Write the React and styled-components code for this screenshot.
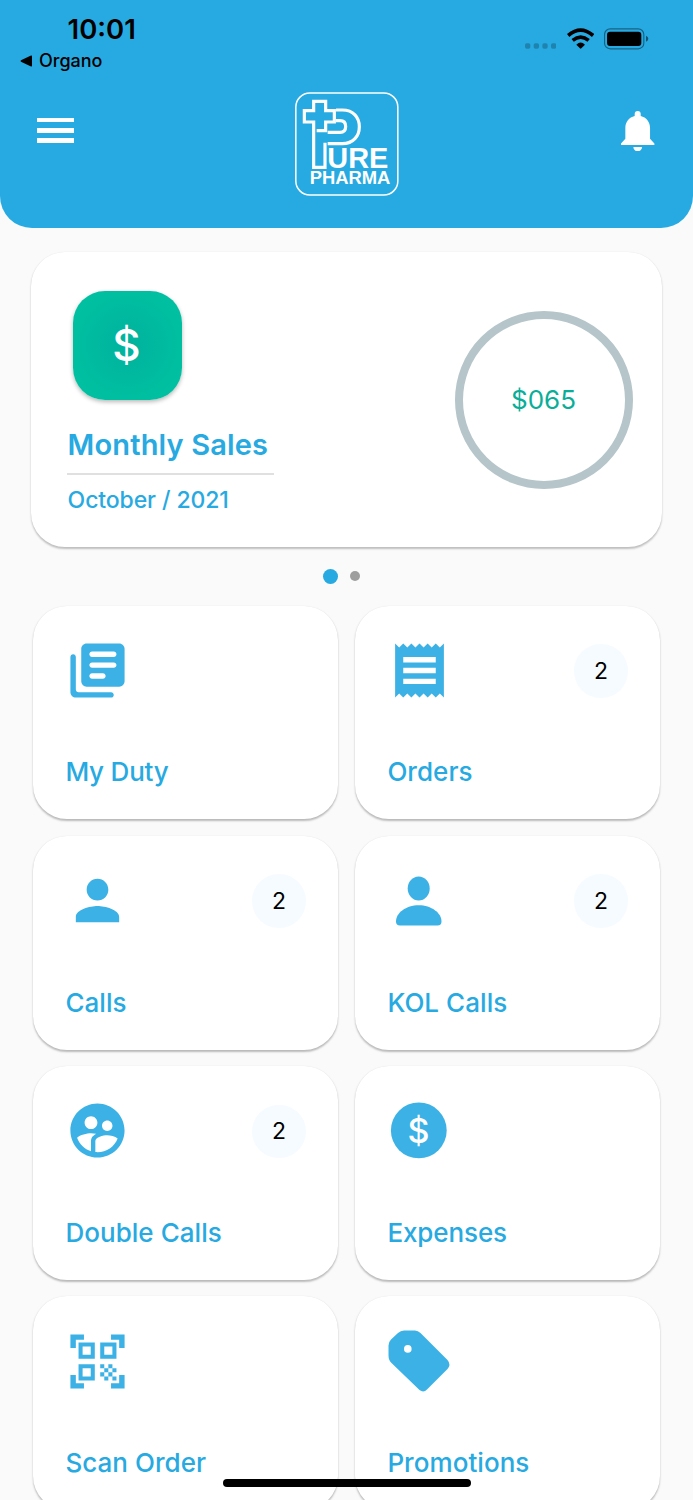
import styled, { createGlobalStyle } from "styled-components"
import { MdPerson, MdQrCodeScanner, MdReceipt, MdSupervisedUserCircle } from "react-icons/md"

const GlobalStyle = createGlobalStyle`
  * {
    box-sizing: border-box;
  }
  body {
    margin: 0;
    background-color: #fafafa;
    font-family: Inter, "Liberation Sans", sans-serif;
    overflow: hidden;
  }
  svg {
    display: block;
    flex-shrink: 0;
  }
`

const Screen = styled.div`
  width: 693px;
  height: 1500px;
  overflow: hidden;
  background-color: #fafafa;
`

const Header = styled.header`
  height: 227.5px;
  background-color: #27aae2;
  border-radius: 0 0 32px 32px;
`

const StatusBar = styled.div`
  height: 92px;
  display: flex;
  justify-content: space-between;
  padding: 13px 44px 0 20px;
`

const Time = styled.div`
  padding-left: 47.5px;
  font-size: 27.5px;
  font-weight: 600;
  line-height: 32px;
`

const BackLink = styled.div`
  display: flex;
  align-items: center;
  gap: 7px;
  margin-top: 5px;
  font-size: 18px;
  font-weight: 500;
  line-height: 22px;
`

const StatusIcons = styled.div`
  display: flex;
  gap: 10.3px;
  padding-top: 15.3px;
`

const NavBar = styled.div`
  display: flex;
  justify-content: space-between;
  padding: 0 38.5px 0 37px;
`

const MenuButton = styled.div`
  width: 76px;
  padding-top: 25.7px;
  display: flex;
  flex-direction: column;
  gap: 5.3px;
`

const MenuLine = styled.span`
  width: 37px;
  height: 4.8px;
  background-color: white;
`

const BellButton = styled.div`
  width: 74px;
  padding-top: 18.7px;
  display: flex;
  justify-content: flex-end;
`

const SalesCard = styled.section`
  width: 631px;
  height: 294.5px;
  margin: 24.5px 0 0 31px;
  padding: 39px 29.5px 0 36px;
  display: flex;
  justify-content: space-between;
  border-radius: 34px;
  background-color: white;
  box-shadow: 0 1.5px 2px rgba(0, 0, 0, 0.24), 0 0 1px rgba(0, 0, 0, 0.04);
`

const SalesIcon = styled.div`
  width: 108.5px;
  height: 108.5px;
  margin-left: 6px;
  padding-right: 1.5px;
  display: flex;
  align-items: center;
  justify-content: center;
  border-radius: 32px;
  color: white;
  font-size: 44px;
  font-weight: 500;
  background: radial-gradient(circle closest-side, #00b29d 0%, #00c0a1 110%);
  box-shadow: 0 2px 4px rgba(0, 0, 0, 0.28);
`

const SalesTitle = styled.h1`
  margin: 26px 0 0 0;
  padding: 0 0 9.5px 0.6px;
  width: 207px;
  border-bottom: 2px solid #e0e0e0;
  color: #27a9e1;
  font-size: 29px;
  font-weight: 600;
  line-height: 38px;
  letter-spacing: 0.15px;
  white-space: nowrap;
`

const SalesDate = styled.div`
  margin-top: 10px;
  padding-left: 0.6px;
  color: #27a9e1;
  font-size: 23px;
  font-weight: 500;
  line-height: 30px;
  letter-spacing: -0.1px;
`

const Ring = styled.div`
  width: 178px;
  height: 178px;
  margin-top: 19.5px;
  display: flex;
  align-items: center;
  justify-content: center;
  border: 8px solid #b5c5ca;
  border-radius: 50%;
  color: #0aae98;
  font-size: 26px;
`

const Dots = styled.div`
  height: 59px;
  display: flex;
  align-items: center;
  justify-content: center;
  gap: 12px;
  padding-right: 10px;
`

const Dot = styled.span`
  width: ${(props) => (props.$active ? "15px" : "10px")};
  height: ${(props) => (props.$active ? "15px" : "10px")};
  border-radius: 50%;
  background-color: ${(props) => (props.$active ? "#27a9e1" : "#9e9e9e")};
`

const Grid = styled.main`
  display: grid;
  grid-template-columns: 305px 305px;
  grid-auto-rows: 213.8px;
  column-gap: 17px;
  row-gap: 16.5px;
  padding-left: 33px;
`

const Tile = styled.div`
  padding: 32.3px 32.2px 0 31.8px;
  border-radius: 34px;
  background-color: white;
  box-shadow: 0 1.5px 2px rgba(0, 0, 0, 0.26), 0 0 1px rgba(0, 0, 0, 0.04);
`

const TileTop = styled.div`
  height: 65px;
  display: flex;
  align-items: center;
  justify-content: space-between;
  color: #3cb1e5;
`

const Badge = styled.span`
  width: 53.5px;
  height: 53.5px;
  margin-top: 1px;
  display: flex;
  align-items: center;
  justify-content: center;
  border-radius: 50%;
  background-color: #f5fbff;
  color: black;
  font-size: 23px;
`

const TileLabel = styled.div`
  margin-top: 52.5px;
  padding-left: 0.6px;
  color: #27a9e1;
  font-size: 26px;
  font-weight: 500;
  line-height: 34px;
  letter-spacing: ${(props) => props.$spacing || "0.05px"};
  white-space: nowrap;
`

const HomeIndicator = styled.div`
  position: fixed;
  left: 223px;
  top: 1478.5px;
  width: 247.5px;
  height: 8.5px;
  border-radius: 5px;
  background-color: black;
`

const BackArrow = () => (
  <svg width="12" height="12" viewBox="0 0 12 12">
    <path d="M1 5.2 11 .6Q12 .3 12 1.2V10.8Q12 11.7 11 11.4L1 6.8Q0 6 1 5.2Z" />
  </svg>
)

const Signal = () => (
  <svg width="31.7" height="21.3" viewBox="75 86 95 64" opacity="0.22">
    <rect x="75" y="132" width="16" height="16" rx="5" />
    <rect x="101" y="132" width="16" height="16" rx="5" />
    <rect x="127" y="132" width="16" height="16" rx="5" />
    <rect x="153" y="132" width="16" height="16" rx="5" />
  </svg>
)

const Wifi = () => (
  <svg width="27.3" height="21.3" viewBox="200 86 82 64">
    <g fill="none" stroke="black" strokeWidth="11">
      <path d="M203.500 108.500Q241 76.500 278.500 108.500" />
      <path d="M217 123Q241 103.500 265 123" />
    </g>
    <path d="M228 136Q241 123 254 136L243 147Q241 149 239 147Z" />
  </svg>
)

const Battery = () => (
  <svg width="44.7" height="21.3" viewBox="313 86 134 64">
    <rect x="314.500" y="88.500" width="118" height="60" rx="17" fill="none" stroke="black" strokeWidth="3.500" opacity="0.42" />
    <rect x="322" y="97" width="103" height="43" rx="9" />
    <path d="M439 109Q446 112 446 118T439 127Z" opacity="0.5" />
  </svg>
)

const Bell = () => (
  <svg width="33.4" height="40.4" viewBox="363 332 100 121" fill="white">
    <path d="M404 347V341A9 9 0 0 1 422 341V347C439 351 450 365 450 383V415L463 429V434H363V429L376 415V383C376 365 387 351 404 347Z" />
    <path d="M400 439.500H426A13 13 0 0 1 400 439.500Z" />
  </svg>
)

const Logo = () => (
  <svg width="104" height="104" viewBox="45 35 312 312">
    <rect x="47.500" y="38" width="306" height="306" rx="42" fill="none" stroke="white" strokeWidth="4.500" />
    <g fill="none" stroke="white" strokeWidth="9.500">
      <path d="M110 151H137V125H163V91H137V63H101V91H73V125H101V261H135V187" />
      <path d="M168 89H187C220 89 238 111 238 139S220 190 187 190H143" />
      <path d="M168 121H180Q197 121 197 138.500T180 156H143" />
    </g>
    <g fill="white" fontFamily="Liberation Sans, sans-serif" fontWeight="700">
      <text x="142" y="263" fontSize="89" textLength="183" lengthAdjust="spacingAndGlyphs">URE</text>
      <text x="89" y="312" fontSize="55" textLength="242" lengthAdjust="spacingAndGlyphs">PHARMA</text>
    </g>
  </svg>
)

const Duty = () => (
  <svg width="65" height="65" viewBox="0 0 24 24" fill="currentColor">
    <path d="M3 6c-.55 0-1 .45-1 1v13c0 1.100.9 2 2 2h13c.55 0 1-.45 1-1s-.45-1-1-1H5c-.55 0-1-.45-1-1V7c0-.55-.45-1-1-1zM20 2H8c-1.100 0-2 .9-2 2v12c0 1.100.9 2 2 2h12c1.100 0 2-.9 2-2V4c0-1.100-.9-2-2-2zm-2 9h-8c-.55 0-1-.45-1-1s.45-1 1-1h8c.55 0 1 .45 1 1s-.45 1-1 1zm-4 4h-4c-.55 0-1-.45-1-1s.45-1 1-1h4c.55 0 1 .45 1 1s-.45 1-1 1zm4-8h-8c-.55 0-1-.45-1-1s.45-1 1-1h8c.55 0 1 .45 1 1s-.45 1-1 1z" />
  </svg>
)

const KolPerson = () => (
  <svg width="65" height="65" viewBox="0 0 65 65" fill="currentColor">
    <ellipse cx="31.700" cy="20.500" rx="11" ry="12" />
    <path d="M13 57.500Q9 57.500 9 53.500C9 45 19 37.300 31.700 37.300S54.500 45 54.500 53.500Q54.500 57.500 50.500 57.500Z" />
  </svg>
)

const Dollar = () => (
  <svg width="65" height="65" viewBox="0 0 65 65">
    <circle cx="31.800" cy="32.400" r="27.900" fill="currentColor" />
    <text x="31.500" y="44.700" fill="white" fontSize="34" fontWeight="500" textAnchor="middle">$</text>
  </svg>
)

const Tag = () => (
  <svg width="65" height="65" viewBox="0 0 65 65" fill="currentColor">
    <path
      fillRule="evenodd"
      d="M17 1.500H28Q31 1.500 33.500 4L60.500 31Q64.300 35.500 60.500 40L40 60.500Q36.500 64 32.500 61L4.500 34Q1.500 31 1.500 26.500V16.500Q1.500 13 4 10.500L11 4Q13.500 1.500 17 1.500ZM20.800 16.100A3.800 3.800 0 1 0 20.800 23.700A3.800 3.800 0 1 0 20.800 16.100Z"
    />
  </svg>
)

const tiles = [
  { label: "My Duty", icon: <Duty />, spacing: "-0.2px" },
  { label: "Orders", icon: <MdReceipt size={65} />, count: 2 },
  { label: "Calls", icon: <MdPerson size={65} />, count: 2 },
  { label: "KOL Calls", icon: <KolPerson />, count: 2 },
  { label: "Double Calls", icon: <MdSupervisedUserCircle size={65} />, count: 2 },
  { label: "Expenses", icon: <Dollar />, spacing: "-0.1px" },
  { label: "Scan Order", icon: <MdQrCodeScanner size={65} /> },
  { label: "Promotions", icon: <Tag /> },
]

export default function App() {
  return (
    <Screen>
      <GlobalStyle />
      <Header>
        <StatusBar>
          <div>
            <Time>10:01</Time>
            <BackLink>
              <BackArrow />
              Organo
            </BackLink>
          </div>
          <StatusIcons>
            <Signal />
            <Wifi />
            <Battery />
          </StatusIcons>
        </StatusBar>
        <NavBar>
          <MenuButton>
            <MenuLine />
            <MenuLine />
            <MenuLine />
          </MenuButton>
          <Logo />
          <BellButton>
            <Bell />
          </BellButton>
        </NavBar>
      </Header>

      <SalesCard>
        <div>
          <SalesIcon>$</SalesIcon>
          <SalesTitle>Monthly Sales</SalesTitle>
          <SalesDate>October / 2021</SalesDate>
        </div>
        <Ring>$065</Ring>
      </SalesCard>

      <Dots>
        <Dot $active />
        <Dot />
      </Dots>

      <Grid>
        {tiles.map((tile) => (
          <Tile key={tile.label}>
            <TileTop>
              {tile.icon}
              {tile.count && <Badge>{tile.count}</Badge>}
            </TileTop>
            <TileLabel $spacing={tile.spacing}>{tile.label}</TileLabel>
          </Tile>
        ))}
      </Grid>
      <HomeIndicator />
    </Screen>
  )
}
